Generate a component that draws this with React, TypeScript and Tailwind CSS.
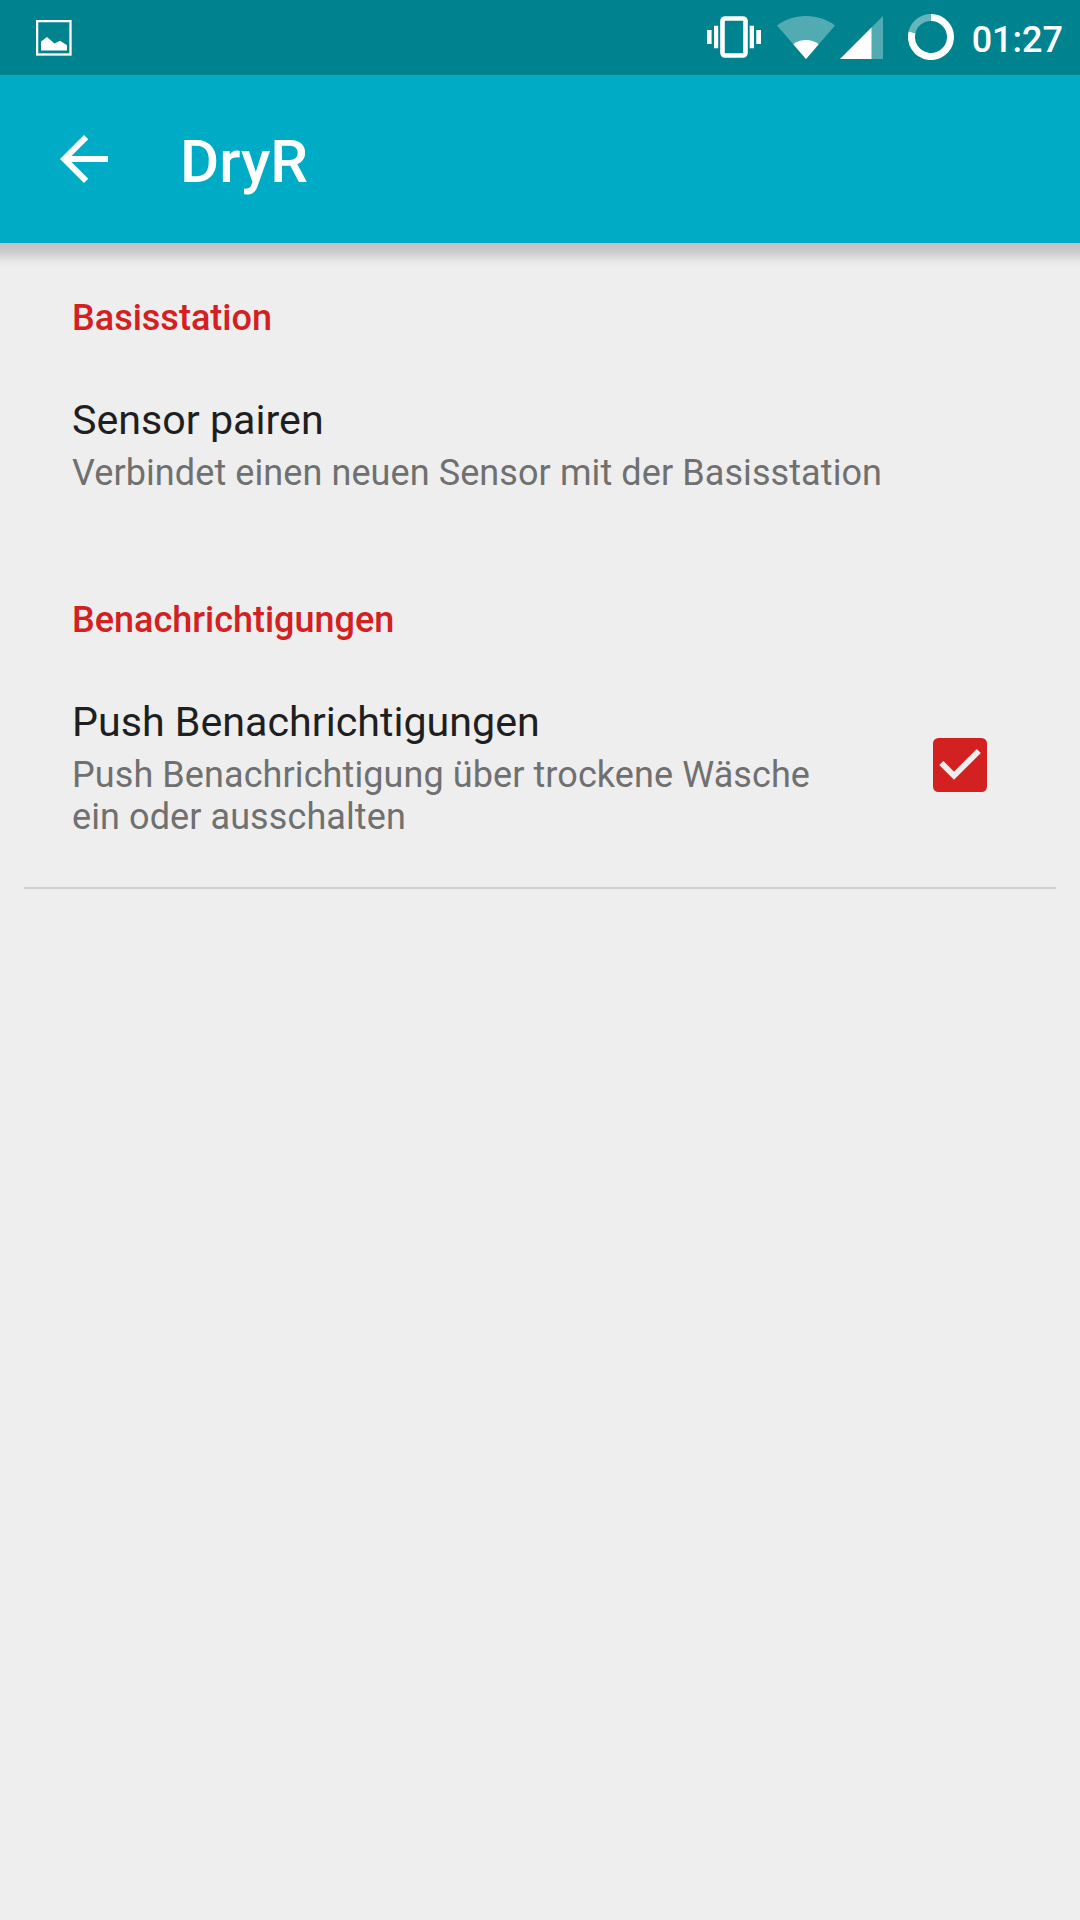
import type { ReactNode } from 'react';

function PictureIcon() {
  return (
    <svg width="36" height="36" viewBox="0 0 36 36" fill="none">
      <rect x="1.100" y="1.100" width="33.400" height="33.400" stroke="#fff" strokeWidth="2.300" />
      <path d="M5 30.500V21.500L11 17l7.500 6.500 5.500-2.800 7 4.500v5.300z" fill="#fff" />
    </svg>
  );
}

function VibrateIcon() {
  return (
    <svg width="54" height="42" viewBox="0 0 54 42">
      <rect x="15.500" y="2.500" width="23" height="37" rx="2.500" fill="none" stroke="#fff" strokeWidth="4.600" />
      <path d="M0 14h4.600v14H0zM7 9.700h4.200v22.600H7zM42.700 9.700H47v22.600h-4.300zM49.300 14H54v14h-4.700z" fill="#fff" />
    </svg>
  );
}

function WifiIcon() {
  return (
    <svg width="58" height="43" viewBox="0 0 58 43">
      <path d="M29 43L0 9.500C8 3.500 18 0 29 0s21 3.500 29 9.500z" fill="#fff" fillOpacity="0.320" />
      <path d="M29 43L16.300 28.200C20 25.300 24.300 24 29 24s9 1.300 12.700 4.200z" fill="#fff" />
    </svg>
  );
}

function SignalIcon() {
  return (
    <svg width="43" height="43" viewBox="0 0 43 43">
      <path d="M43 0v43H0z" fill="#fff" fillOpacity="0.320" />
      <path d="M31.500 11.500V43H0z" fill="#fff" />
    </svg>
  );
}

function BatteryIcon() {
  return (
    <svg width="46" height="46" viewBox="0 0 46 46" fill="none" stroke="#fff" strokeWidth="7">
      <path d="M3.970 18.270A19.500 19.500 0 0 1 23 3.500" strokeOpacity="0.400" />
      <path d="M23 3.500A19.500 19.500 0 1 1 4.050 18.400" />
    </svg>
  );
}

function BackIcon() {
  return (
    <svg width="48" height="48" viewBox="4 4 16 16" fill="#fff">
      <path d="M20 11H7.830l5.590-5.590L12 4l-8 8 8 8 1.410-1.410L7.830 13H20v-2z" />
    </svg>
  );
}

function CheckedBox() {
  return (
    <svg width="54" height="54" viewBox="0 0 54 54" role="img" aria-label="Aktiviert">
      <rect width="54" height="54" rx="5.500" fill="#d32020" />
      <path d="M8.300 25L21 37.700L45.800 13" fill="none" stroke="#eee" strokeWidth="5.800" />
    </svg>
  );
}

function Category({ children }: { children: ReactNode }) {
  return <h2 className="text-[36px] leading-[42px] font-medium text-[#d32020]">{children}</h2>;
}

function Preference({ title, summary }: { title: string; summary: ReactNode }) {
  return (
    <div>
      <div className="text-[41.2px] leading-[50px] text-[#1f1f1f]">{title}</div>
      <div className="mt-[7px] text-[36px] leading-[42px] tracking-[0.09px] text-[#707070]">{summary}</div>
    </div>
  );
}

export default function App() {
  return (
    <div className="flex h-[1920px] w-[1080px] flex-col overflow-hidden bg-[#eeeeee] font-['Roboto',sans-serif]">
      <div className="flex h-[75px] shrink-0 items-start justify-between bg-[#00838f] pl-9">
        <div className="pt-5">
          <PictureIcon />
        </div>
        <div className="flex items-start pr-[17px]">
          <div className="pt-4">
            <VibrateIcon />
          </div>
          <div className="ml-4 pt-4">
            <WifiIcon />
          </div>
          <div className="ml-[5px] pt-4">
            <SignalIcon />
          </div>
          <div className="ml-[25px] pt-[14px]">
            <BatteryIcon />
          </div>
          <div className="ml-[18px] pt-[19px] text-[36px] leading-[42px] font-medium text-white">01:27</div>
        </div>
      </div>
      <header className="flex h-[168px] shrink-0 items-center bg-[#00acc5] pl-[60px]">
        <BackIcon />
        <h1 className="mt-[52px] ml-[72px] self-start text-[60px] leading-[70px] font-medium text-white">DryR</h1>
      </header>
      <div className="h-6 shrink-0 bg-[linear-gradient(to_bottom,#bfbfbf_0%,#cecece_40%,#e6e6e6_75%,#eeeeee_100%)]" />
      <main className="pt-[30px]">
        <section className="px-[72px]">
          <Category>Basisstation</Category>
          <div className="mt-14">
            <Preference title="Sensor pairen" summary="Verbindet einen neuen Sensor mit der Basisstation" />
          </div>
        </section>
        <section className="mt-[105px] px-[72px]">
          <Category>Benachrichtigungen</Category>
          <div className="mt-14 flex items-start justify-between pr-[21px]">
            <Preference
              title="Push Benachrichtigungen"
              summary={
                <>
                  Push Benachrichtigung über trockene Wäsche
                  <br />
                  ein oder ausschalten
                </>
              }
            />
            <div className="pt-[41px]">
              <CheckedBox />
            </div>
          </div>
        </section>
        <div className="mx-6 mt-[49px] h-[2px] bg-[#cfcfcf]" />
      </main>
    </div>
  );
}
